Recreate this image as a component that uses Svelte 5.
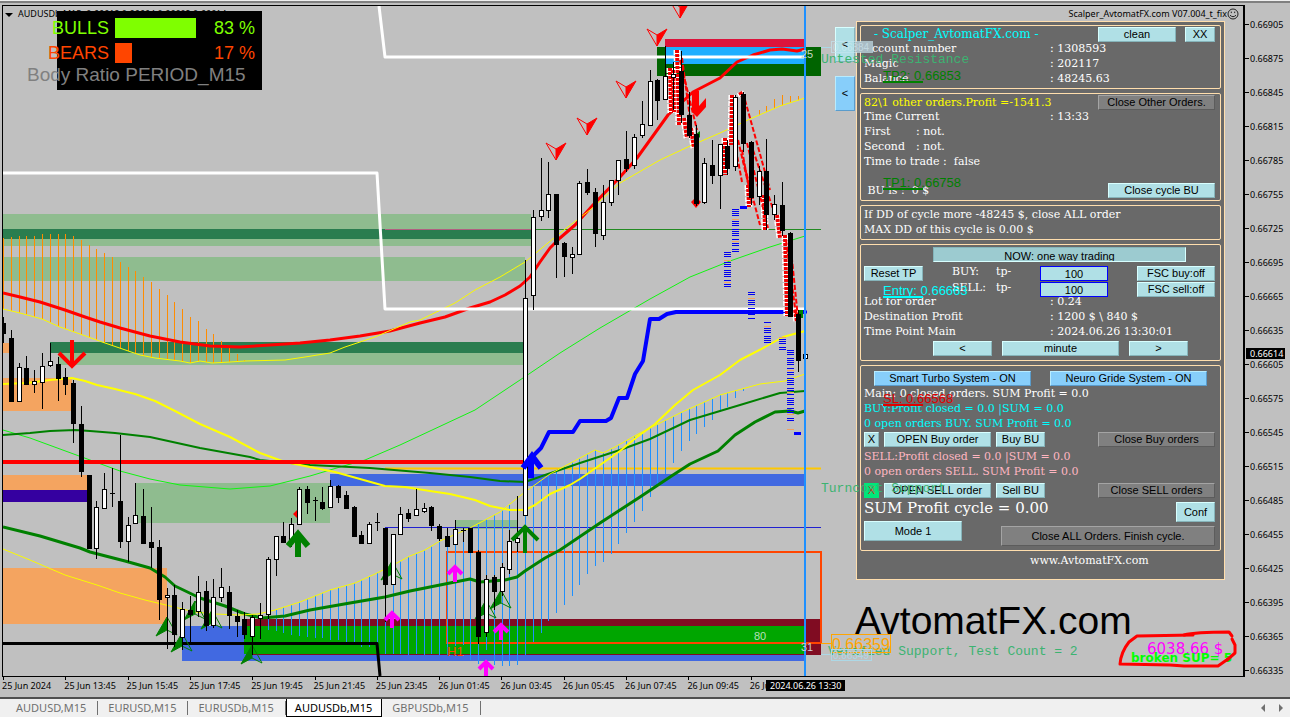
<script>
  const STEP = 7.79;
  const barX = (i) => Math.round(3 + STEP * i);

  // high, body top, body bottom, low, rising
  const candles = [
    [317, 323, 333, 343, 0], [330, 338, 401, 402, 0], [363, 367, 401, 401, 1], [356, 368, 384, 385, 0],
    [370, 381, 384, 393, 1], [353, 366, 382, 409, 1], [343, 361, 365, 367, 1], [357, 364, 378, 401, 0],
    [368, 377, 384, 395, 0], [380, 383, 423, 443, 0], [406, 424, 471, 477, 0], [475, 475, 548, 548, 0],
    [501, 507, 548, 559, 1], [473, 489, 508, 508, 1], [468, 493, 494, 507, 0], [435, 501, 541, 548, 0],
    [517, 525, 541, 562, 1], [483, 515, 523, 523, 1], [489, 516, 543, 543, 0], [507, 542, 547, 568, 0],
    [540, 547, 599, 620, 0], [588, 595, 597, 649, 1], [585, 595, 634, 647, 0], [602, 609, 637, 650, 1],
    [596, 610, 614, 645, 0], [576, 592, 611, 617, 1], [581, 591, 625, 631, 0], [579, 597, 625, 628, 1],
    [568, 587, 597, 602, 1], [586, 592, 615, 629, 0], [610, 616, 621, 637, 0], [612, 619, 634, 639, 0],
    [615, 617, 636, 655, 1], [603, 615, 618, 639, 1], [557, 559, 614, 619, 1], [536, 536, 559, 576, 1],
    [522, 536, 542, 542, 0], [518, 524, 539, 547, 1], [487, 489, 524, 524, 1], [486, 489, 502, 514, 0],
    [497, 500, 501, 521, 0], [487, 502, 508, 510, 0], [480, 486, 507, 507, 1], [485, 486, 497, 503, 0],
    [491, 495, 508, 509, 0], [506, 507, 536, 537, 0], [531, 535, 543, 543, 0], [522, 524, 543, 543, 1],
    [513, 522, 523, 531, 0], [528, 528, 584, 622, 0], [534, 534, 584, 584, 1], [507, 514, 534, 534, 1],
    [509, 513, 518, 522, 0], [489, 509, 515, 516, 1], [503, 508, 511, 513, 1], [506, 507, 525, 531, 0],
    [524, 526, 538, 541, 0], [528, 536, 546, 546, 0], [520, 529, 544, 544, 1], [528, 530, 531, 542, 0],
    [528, 528, 552, 552, 0], [550, 552, 636, 644, 0], [575, 579, 632, 637, 1], [575, 577, 591, 610, 0],
    [563, 567, 591, 596, 1], [530, 541, 569, 574, 1], [496, 538, 542, 552, 1], [260, 298, 515, 515, 1],
    [210, 217, 295, 310, 1], [158, 210, 216, 221, 1], [162, 194, 210, 218, 1], [194, 194, 244, 278, 0],
    [242, 243, 256, 277, 0], [247, 254, 257, 274, 1], [181, 183, 254, 254, 1], [169, 182, 192, 195, 0],
    [188, 192, 233, 247, 0], [185, 202, 235, 240, 1], [180, 180, 202, 206, 1], [160, 160, 180, 195, 1],
    [131, 159, 168, 172, 0], [134, 137, 165, 169, 1], [101, 124, 135, 138, 1], [70, 81, 125, 126, 1],
    [79, 80, 100, 120, 0], [46, 76, 99, 99, 1], [62, 74, 77, 110, 1], [51, 71, 114, 123, 0],
    [92, 115, 135, 138, 0], [125, 134, 203, 206, 0], [158, 163, 202, 204, 1], [140, 165, 175, 184, 0],
    [144, 144, 175, 209, 1], [140, 146, 168, 175, 0], [95, 97, 166, 171, 1], [92, 94, 143, 152, 0],
    [141, 142, 197, 205, 0], [166, 171, 196, 205, 1], [139, 171, 214, 230, 0], [195, 204, 214, 220, 1],
    [182, 205, 230, 236, 0], [232, 233, 316, 316, 0], [310, 314, 360, 372, 0], [354, 354, 358, 360, 1],
  ];

  const upperBand = [
    [3, 309], [20, 313], [42, 319], [60, 327], [80, 334], [105, 343], [140, 355], [155, 358], [180, 361],
    [190, 363], [200, 361], [212, 363], [230, 362], [245, 361], [285, 360], [305, 357], [330, 353],
    [345, 347], [375, 337], [410, 322], [420, 320], [455, 303], [475, 290], [500, 277], [525, 262],
    [560, 233], [590, 210], [620, 183], [660, 160], [690, 146], [720, 133], [750, 119], [780, 106], [805, 98],
  ];
  const lowerBand = [
    [3, 549], [30, 560], [65, 575], [97, 585], [120, 593], [145, 600], [170, 606], [195, 612], [215, 614],
    [240, 615], [258, 614], [275, 610], [300, 602], [330, 590], [355, 583], [375, 574], [395, 564],
    [410, 556], [425, 550], [440, 541], [470, 528], [500, 512], [525, 492], [550, 474], [565, 466],
    [580, 458], [595, 450], [603, 453], [615, 447], [640, 433], [680, 413], [720, 395], [760, 384],
    [785, 381], [805, 374],
  ];

  const at = (line, x) => {
    const k = Math.max(1, line.findIndex((p) => p[0] >= x));
    const [x0, y0] = line[k - 1];
    const [x1, y1] = line[k];
    return y0 + ((y1 - y0) * (x - x0)) / (x1 - x0);
  };

  const orangeTops = [
    238, 237, 236, 236, 236, 234, 234, 234, 234, 236, 240, 245, 249, 253, 257, 262, 267, 271, 277, 282,
    289, 295, 302, 309, 317, 321, 329, 334, 341, 347, 354, 360,
  ];
  const orangeRight = [[97, 110], [98, 106], [99, 99], [100, 95], [101, 96], [102, 96]];
  const orangeBars = [...orangeTops.map((y, i) => [i, y]), ...orangeRight].map(([i, y]) => ({
    x: barX(i),
    y1: y,
    y2: at(upperBand, barX(i)),
  }));

  // lower ends of the blue histogram, first one belongs to bar 33
  const blueEnds = [
    628, 630, 631, 633, 635, 636, 637, 638, 638, 640, 640, 642, 645, 647, 647, 650, 654, 654, 654, 655,
    654, 655, 654, 655, 655, 646, 645, 660, 664, 650, 665, 666, 666, 665, 655, 642, 633, 621, 613, 605,
    596, 585, 574, 566, 562, 554, 544, 533, 522, 511, 497, 487, 474, 463, 451, 441, 434, 427, 420, 412,
    407, 398, 391,
  ];
  const blueBars = blueEnds.map((y, k) => ({ x: barX(33 + k), y1: at(lowerBand, barX(33 + k)), y2: y }));

  const redMa =
    "3,293 20,297 40,302 65,310 85,317 100,322 120,328 150,336 180,342 210,346 240,347 270,345 300,343 330,340 360,336 390,331 420,323 445,317 470,308 490,302 505,295 520,286 530,277 540,262 550,248 560,238 575,225 593,205 620,177 637,158 650,140 668,115 693,92 720,78 737,62 753,55 770,50 782,49 797,51 805,49";
  const midYellow =
    "3,384 27,383 50,380 72,378 85,381 97,385 115,389 135,394 155,401 175,411 200,424 230,437 260,453 285,462 310,467 335,472 360,479 385,486 405,487 430,491 450,494 475,500 490,506 510,510 525,510 535,505 550,494 570,485 580,479 600,465 620,451 637,437 655,424 675,405 693,390 720,375 740,360 765,347 783,337 805,331";
  const greenThick =
    "3,527 40,536 80,548 90,552 125,561 150,568 165,577 175,586 200,598 225,606 245,614 262,618 285,616 310,610 350,603 385,597 410,591 430,587 450,583 470,579 480,582 505,580 517,577 525,571 545,558 560,550 600,523 640,497 670,477 690,464 718,451 735,435 755,422 775,412 790,411 798,413 805,411";
  const greenThin =
    "3,435 30,433 50,431 75,430 90,431 115,433 150,437 200,448 250,457 260,460 310,465 370,468 430,473 470,477 500,481 525,482 545,475 580,463 620,450 650,439 690,420 740,405 780,393 805,391";
  const limeLine =
    "3,430 30,438 60,449 90,460 120,471 150,479 180,485 230,489 270,486 310,476 340,467 365,460 400,445 430,431 475,410 520,380 560,353 600,328 650,299 690,277 730,261 770,247 805,236";
  const blueStep =
    "527,462 537,452 541,448 549,432 573,432 580,421 606,421 611,418 619,398 627,398 635,374 643,361 650,319 659,319 667,314 676,312 805,312";

  const zones = [
    [3, 214, 528, 32, "#8fbc8f"], [3, 229, 528, 10, "#2a7d4f"], [3, 257, 522, 24, "#8fbc8f"],
    [50, 342, 473, 11, "#2a7d4f"], [58, 353, 465, 12, "#8fbc8f"], [136, 483, 194, 40, "#8fbc8f"],
    [455, 520, 62, 9, "#8fbc8f"], [3, 343, 8, 10, "#f4a460"], [3, 378, 69, 33, "#f4a460"],
    [3, 475, 85, 15, "#f4a460"], [3, 490, 85, 12, "#3500a0"], [3, 568, 164, 56, "#f4a460"],
    [330, 474, 475, 12, "#4169e1"], [182, 626, 623, 35, "#4169e1"], [247, 619, 574, 36, "#800c22"],
    [244, 626, 561, 28, "#00a600"], [657, 47, 164, 29, "#006400"], [665, 39, 140, 8, "#dc143c"],
    [665, 47, 140, 17, "#1eaeff"],
  ];

  const halfDown = [[556, 151], [587, 126], [626, 89], [657, 37], [680, 9]];
  const halfUp = [[167, 627], [182, 643], [195, 611], [212, 620], [252, 655], [392, 571], [486, 610], [501, 600]];
  const magentaUp = [[455, 573], [392, 619], [501, 631], [486, 668]];

  // bar centre, first row, last row
  const stacks = [
    [735, 209, 251], [727, 252, 289], [751, 292, 319], [767, 322, 345], [782, 337, 349], [790, 350, 420], [790, 429, 430],
  ];
  const ticks = stacks.flatMap(([x, from, to], s) => {
    const rows = [];
    for (let y = from, n = s; y <= to; y += n % 4 === 3 ? 4 : 2, n++) {
      rows.push({ x: x - 3, y, color: n % 9 === 4 || to - from < 3 ? "#f4a060" : "#0000f0" });
    }
    return rows;
  });

  const trades = [
    "670,68 671,113", "677,50 679,125", "673,70 674,112", "684,118 687,138", "691,128 694,148", "725,138 725,175",
    "732,95 731,145", "740,92 742,96", "748,185 749,207", "764,195 765,230", "777,215 780,238",
    "785,235 787,316", "795,310 797,322",
  ];
  const tradeLinks = [
    "680,60 697,130", "682,58 690,118", "745,100 770,190", "736,150 742,182", "738,140 749,187", "742,150 752,205",
    "743,160 760,225", "747,143 768,228", "753,150 775,215", "786,240 796,315", "791,250 798,318",
  ];

  const prices = Array.from({ length: 20 }, (_, i) => (0.66905 - i * 0.0003).toFixed(5));
  const times = [
    "25 Jun 2024", "25 Jun 13:45", "25 Jun 15:45", "25 Jun 17:45", "25 Jun 19:45", "25 Jun 21:45", "25 Jun 23:45",
    "26 Jun 01:45", "26 Jun 03:45", "26 Jun 05:45", "26 Jun 07:45", "26 Jun 09:45", "26 Jun 11:45",
  ];
  const tabs = ["AUDUSD,M15", "EURUSD,M15", "EURUSDb,M15", "AUDUSDb,M15", "GBPUSDb,M15"];
  let active = $state("AUDUSDb,M15");

  const levels = [
    ["TP2: 0.66853", 80, "#008000"], ["TP1: 0.66758", 187, "#008000"],
    ["Entry: 0.66663", 295, "#00ffff"], ["SL: 0.66568", 403, "#e00000"],
  ];

  let buyTp = $state("100");
  let sellTp = $state("100");
  const str = (line) => line.map((p) => p.join(",")).join(" ");
</script>

<div class="terminal">
  <div class="toolbar-edge"></div>

  <main class="window">
    <section class="plot" aria-label="AUDUSDb M15 chart">
      <header class="chart-head">
        <span><i class="caret"></i>AUDUSDb,M15: 0.66618 0.66664 0.66602 0.66614</span>
        <span class="expert">
          Scalper_AvtomatFX.com V07.004_t_fix
          <svg width="12" height="12" viewBox="0 0 12 12" fill="none" stroke="#222">
            <circle cx="6" cy="6" r="5" />
            <path d="M3 7.2Q6 10.2 9 7.2M4.3 3.6v1.5M7.7 3.6v1.5" />
          </svg>
        </span>
      </header>

      <svg class="layer" width="1241" height="670" viewBox="3 6 1241 670">
        {#each zones as [x, y, w, h, fill]}
          <rect {x} {y} width={w} height={h} {fill} />
        {/each}
        <path d="M385 229.5H531" stroke="#b06080" />
        <path d="M531 229.5H821" stroke="#228b22" />
        <path d="M385 468.5H821" stroke="#ffc800" stroke-width="2" />
        <path d="M385 527.5H821" stroke="#2020d0" />
        <rect x="447" y="552" width="374" height="91" fill="none" stroke="#ff4500" stroke-width="2" />

        <g stroke="#ff8c00">
          {#each orangeBars as b}
            <line x1={b.x + 0.5} x2={b.x + 0.5} y1={b.y1} y2={b.y2} />
          {/each}
        </g>
        <g stroke="#1e90ff">
          {#each blueBars as b}
            <line x1={b.x + 0.5} x2={b.x + 0.5} y1={b.y1} y2={b.y2} />
          {/each}
        </g>

        <g fill="none" stroke-linejoin="round">
          <polyline points={limeLine} stroke="#11f511" />
          <polyline points={greenThin} stroke="#008000" stroke-width="2" />
          <polyline points={greenThick} stroke="#008000" stroke-width="3" />
          <polyline points={midYellow} stroke="#ffff00" stroke-width="2" />
          <polyline points={redMa} stroke="#ff0000" stroke-width="3" />
          <polyline points={str(upperBand)} stroke="#fafa00" />
          <polyline points={str(lowerBand)} stroke="#fafa00" />
          <path d="M3 462H523" stroke="#ff0000" stroke-width="4" />
          <path d="M379 6L385 57H805M3 173H377L385 309H805" stroke="#fff" stroke-width="3" />
          <polyline points={blueStep} stroke="#0000ff" stroke-width="4" />
          <path d="M3 643.5H377L380 676" stroke="#000" stroke-width="3" />
        </g>

        {#each halfUp as [x, y]}
          <g transform="translate({x} {y})" stroke="#008000">
            <path d="M0 -10L-11 9L0 3Z" fill="#008000" />
            <path d="M0 -10L10 8L0 3" fill="none" />
          </g>
        {/each}
        {#each halfDown as [x, y]}
          <g transform="translate({x} {y})" stroke="#ff0000">
            <path d="M0 9L10 -8L0 -2Z" fill="#ff0000" />
            <path d="M0 9L-10 -8L0 -2" fill="none" />
          </g>
        {/each}

        <path d="M692 112V91H699V106L706 98V107L697 117Z" fill="#ff0000" />
        <g fill="none">
          {#each trades as points}
            <polyline {points} stroke="#fff" stroke-width="7" stroke-dasharray="5 1" />
          {/each}
          {#each tradeLinks as points}
            <polyline {points} stroke="#ff0000" stroke-width="2" stroke-dasharray="5 2" />
          {/each}
          {#each trades as points}
            <polyline {points} stroke="#f00000" stroke-width="4" stroke-dasharray="3 1" />
          {/each}
        </g>
        <path d="M691 202L696 208L701 202L696 197Z M293 514L298 509L302 514L298 519Z" fill="#ff0000" />
        <path d="M696 134L700 131V138Z M781 218h4v9h-4Z M799 310h4v8h-4Z" fill="#008000" />

        {#each candles as [high, top, bottom, low, up], i}
          <line x1={barX(i) + 0.5} x2={barX(i) + 0.5} y1={high} y2={low} stroke="#000" />
          {#if bottom - top < 2}
            <rect x={barX(i) - 2} y={top} width="5" height="1" />
          {:else if up}
            <rect x={barX(i) - 1.5} y={top + 0.5} width="4" height={bottom - top} fill="#fff" stroke="#000" />
          {:else}
            <rect x={barX(i) - 2} y={top} width="5" height={bottom - top + 1} />
          {/if}
        {/each}

        <g fill="none" stroke-width="4">
          <path d="M72 340V364M59 353L72 366L85 353" stroke="#ff0000" />
          <path d="M525 553V529M512 540L525 527L538 540" stroke="#008000" />
          <path d="M531 478V456M523 468L532 456L541 468" stroke="#0000ff" stroke-width="6" />
          <path d="M298 557V536M288 546L298 534L308 546" stroke="#008000" stroke-width="6" />
          {#each magentaUp as [x, y]}
            <path transform="translate({x} {y})" d="M0 9V-5M-7 1L0 -6L7 1" stroke="#ff00ff" />
          {/each}
        </g>

        {#each ticks as t}
          <rect x={t.x} y={t.y} width="7" height="1" fill={t.color} />
        {/each}
        <path d="M740 207.5H747M794 433.5H801M803 312H807" stroke="#0000ff" stroke-width="3" />
        <path d="M805 6V676" stroke="#1e90ff" stroke-width="2" />

        <g class="sans" font-size="11">
          <text x="754" y="640" fill="#b8e0b8">80</text>
          <text x="801" y="651" fill="#c8c8d8">31</text>
          <text x="801" y="58" fill="#c8d8c8">25</text>
          <text x="447" y="656" font-size="13" fill="#ff4500">H1</text>
        </g>
      </svg>

      <div class="ratio">
        <span class="bulls">BULLS</span>
        <i class="bar bull-bar" style="width: 81px"></i>
        <span class="bulls">83 %</span>
        <span class="bears">BEARS</span>
        <i class="bar bear-bar" style="width: 17px"></i>
        <span class="bears">17 %</span>
        <span class="caption">Body Ratio PERIOD_M15</span>
      </div>

      <div class="dock">
        <div class="flips">
          <button class="flip">&lt;</button>
          <button class="flip sky">&lt;</button>
        </div>

        <div class="panel">
          <section class="box">
            <div class="line head">
              <h1>- Scalper_AvtomatFX.com -</h1>
              <button class="w78">clean</button>
              <button class="w30">XX</button>
            </div>
            <p><span>Account number</span>: 1308593</p>
            <p><span>Magic</span>: 202117</p>
            <p><span>Balance</span>: 48245.63</p>
          </section>

          <section class="box">
            <div class="line head">
              <strong>82\1 other orders.Profit =-1541.3</strong>
              <button class="w117 gray">Close Other Orders.</button>
            </div>
            <p><span>Time Current</span>: 13:33</p>
            <p><span class="short">First</span>: not.</p>
            <p><span class="short">Second</span>: not.</p>
            <p>Time to trade :&nbsp; false</p>
            <div class="line bu">
              <p>&nbsp;BU is :&nbsp; 0 $</p>
              <button class="w107">Close cycle BU</button>
            </div>
          </section>

          <section class="box">
            <p>If DD of cycle more -48245 $, close ALL order</p>
            <p>MAX DD of this cycle is 0.00 $</p>
          </section>

          <section class="box">
            <button class="mode-now">NOW: one way trading</button>
            <div class="tp">
              <button class="w59">Reset TP</button>
              <label for="buy-tp">BUY:</label><span>tp-</span>
              <input id="buy-tp" bind:value={buyTp} />
              <button class="w78">FSC buy:off</button>
              <i></i>
              <label for="sell-tp">SELL:</label><span>tp-</span>
              <input id="sell-tp" bind:value={sellTp} />
              <button class="w78">FSC sell:off</button>
            </div>
            <div class="after-tp">
              <p><span>Lot for order</span>: 0.24</p>
              <p><span>Destination Profit</span>: 1200 $ \ 840 $</p>
              <p><span>Time Point Main</span>: 2024.06.26 13:30:01</p>
            </div>
            <div class="line stepper">
              <button class="w59">&lt;</button>
              <button class="w117">minute</button>
              <button class="w59">&gt;</button>
            </div>
          </section>

          <section class="box">
            <div class="line systems">
              <button class="sky">Smart Turbo System - ON</button>
              <button class="sky">Neuro Gride System - ON</button>
            </div>
            <p>Main: 0 closed orders. SUM Profit = 0.0</p>
            <p class="cyan">BUY:Profit closed = 0.0 |SUM = 0.0</p>
            <p class="cyan">0 open orders BUY. SUM Profit = 0.0</p>
            <div class="line deal">
              <button class="w15">X</button>
              <button class="w107">OPEN Buy order</button>
              <button class="w49">Buy BU</button>
              <button class="w117 gray">Close Buy orders</button>
            </div>
            <p class="pink">SELL:Profit closed = 0.0 |SUM = 0.0</p>
            <p class="pink">0 open orders SELL. SUM Profit = 0.0</p>
            <div class="line deal sell">
              <button class="w15 on">X</button>
              <button class="w107">OPEN SELL order</button>
              <button class="w49">Sell BU</button>
              <button class="w117 gray">Close SELL orders</button>
            </div>
            <div class="finish">
              <div class="left">
                <p class="sum">SUM Profit cycle = 0.00</p>
                <button class="tall mode">Mode 1</button>
              </div>
              <div class="right">
                <button class="tall conf">Conf</button>
                <button class="tall gray all">Close ALL Orders. Finish cycle.</button>
              </div>
            </div>
          </section>

          <a href="#site">www.AvtomatFX.com</a>
        </div>
      </div>

      <svg class="layer marks" width="1241" height="670" viewBox="3 6 1241 670">
        <rect x="831.5" y="41.5" width="41" height="11" fill="none" stroke="#c4e4ee" stroke-opacity=".7" />
        <rect x="856" y="42" width="16" height="10" fill="#a9bcc4" />
        <text class="sans" x="833" y="51" font-size="10" fill="#d4ecf4" fill-opacity=".6">0.66884</text>
        <path d="M821 47.5H831M821 654.5H831" stroke="#add8e6" />
        <g class="mono" fill="#3cb371">
          <text x="821" y="63">Untested Resistance</text>
          <text x="821" y="492">Turncoat Support</text>
          <text x="828" y="655">Verified Support, Test Count = 2</text>
        </g>
        {#each levels as [label, y, color]}
          <g class="sans" font-size="13" fill={color}>
            <text x="883" {y}>{label}</text>
            <rect x="883" y={y + 1} width="40" height="2" />
          </g>
        {/each}
        <g class="sans">
          <text x="855" y="634" font-size="39">AvtomatFX.com</text>
          <rect x="831.5" y="634.5" width="59" height="18" fill="none" stroke="#ffa500" />
          <path d="M821 643.5H831" stroke="#ffa500" />
          <text x="832" y="650" font-size="16" fill="#ffa500">0.66359</text>
          <rect x="831.5" y="649.5" width="40" height="11" fill="none" stroke="#add8e6" />
          <text x="833" y="659" font-size="10" fill="#add8e6">0.66349</text>
        </g>
        <g class="verdana">
          <text x="1147" y="654" font-size="15" fill="#ff00ff">6038.66 $</text>
          <text x="1131" y="662" font-size="12" font-weight="700" fill="#00ff00">broken SUP= 5</text>
        </g>
        <g fill="none" stroke="#ff0000" stroke-width="3" stroke-linecap="round" stroke-linejoin="round">
          <path d="M1193 635L1137 636L1129 642Q1121 652 1120 664L1170 665L1184 666L1218 666L1228 659" />
          <path d="M1184 635Q1195 632 1229 632L1232 636M1232 639L1235 645L1235 653L1227 660" />
        </g>
      </svg>
    </section>

    <aside class="prices">
      {#each prices as price}
        <span>{price}</span>
      {/each}
      <b class="bid">0.66614</b>
    </aside>

    <footer class="times">
      <div class="dates">
        {#each times as time}
          <span>{time}</span>
        {/each}
      </div>
      <b class="cursor-time">2024.06.26 13:30</b>
    </footer>
  </main>

  <nav class="tabs">
    {#each tabs as tab}
      <button class:active={active === tab} onclick={() => (active = tab)}>{tab}</button>
    {/each}
    <div class="scroll">
      <svg width="24" height="8" viewBox="0 0 24 8" fill="#707070">
        <path d="M5 0V8L1 4ZM19 0V8L23 4Z" />
      </svg>
    </div>
  </nav>
</div>

<style>
  :global(body) {
    margin: 0;
    background: #c0c0c0;
  }

  .terminal {
    display: flex;
    flex-direction: column;
    height: 100vh;
    overflow: hidden;
    font-family: "Noto Sans", "Open Sans", sans-serif;
    font-size: 9px;
    color: #000;
  }

  .toolbar-edge {
    height: 1px;
    background: #f0f0f0;
    border-bottom: 2px solid #808080;
    margin-bottom: 2px;
  }

  .window {
    flex: 1;
    min-height: 0;
    display: grid;
    grid-template: minmax(0, 1fr) 20px / minmax(0, 1fr) 45px;
    padding-left: 2px;
    background: #c0c0c0;
  }

  .plot {
    position: relative;
    overflow: hidden;
    border: 1px solid #000;
    border-right-width: 2px;
  }

  .chart-head {
    display: flex;
    justify-content: space-between;
    padding: 0 4px 0 2px;
    line-height: 15px;
  }

  .caret {
    display: inline-block;
    margin-right: 5px;
    border: 4px solid transparent;
    border-top-color: #000;
    border-bottom: 0;
  }

  .expert {
    display: flex;
    align-items: center;
  }

  .layer {
    position: absolute;
    top: 0;
    left: 0;
  }

  .marks {
    pointer-events: none;
  }

  .sans {
    font-family: "Liberation Sans", Arial, sans-serif;
  }

  .mono {
    font: 13px "Liberation Mono", monospace;
  }

  .verdana {
    font-family: "DejaVu Sans", Verdana, sans-serif;
  }

  .ratio {
    position: absolute;
    top: 5px;
    left: 24px;
    width: 235px;
    height: 79px;
    box-sizing: border-box;
    padding: 4px 7px 0 0;
    display: grid;
    grid-template: 26px 24px 20px / 82px 82px 1fr;
    column-gap: 6px;
    justify-items: end;
    font: 18px/26px "Liberation Sans", Arial, sans-serif;
    background: linear-gradient(#000, #000) 30px 0 / 205px 79px no-repeat;
  }

  .ratio span,
  .ratio .bar {
    align-self: center;
  }

  .bulls {
    color: #7fff00;
  }

  .bears {
    color: #ff4500;
  }

  .bar {
    justify-self: start;
    height: 20px;
    background: #7fff00;
  }

  .bear-bar {
    background: #ff4500;
  }

  .ratio .caption {
    grid-column: 1 / -1;
    justify-self: start;
    font-size: 19px;
    color: #808080;
  }

  .dock {
    position: absolute;
    top: 15px;
    right: 18px;
    display: flex;
    font: 11px/15px "DejaVu Serif", "Bookman Old Style", serif;
    color: #fff;
  }

  .flips {
    display: flex;
    flex-direction: column;
    gap: 14px;
    padding-top: 6px;
  }

  .flips .flip {
    width: 20px;
    height: 35px;
  }

  .panel {
    box-sizing: border-box;
    width: 369px;
    height: 559px;
    padding: 3px;
    display: flex;
    flex-direction: column;
    background: #696969;
    border: 1px solid #ffdead;
    margin-left: 1px;
  }

  .box {
    border: 1px solid #ffdead;
    border-radius: 2px;
    padding: 1px 5px 2px 3px;
    margin-bottom: 4px;
  }

  p,
  h1 {
    margin: 0;
    font: inherit;
    white-space: nowrap;
  }

  h1 {
    padding-left: 10px;
    font-size: 12px;
    color: #00ffff;
  }

  strong {
    font-weight: 400;
    color: #ffff00;
    white-space: nowrap;
  }

  p span {
    display: inline-block;
    width: 186px;
  }

  p .short {
    width: 52px;
  }

  .line {
    display: flex;
  }

  .head {
    height: 14px;
    gap: 9px;
  }

  .head > :first-child {
    flex: 1;
  }

  .bu {
    justify-content: space-between;
    padding-top: 14px;
  }

  button,
  input {
    box-sizing: border-box;
    height: 15px;
    padding: 0;
    font: 11px/13px "Liberation Sans", Arial, sans-serif;
    text-align: center;
    white-space: nowrap;
    color: #000;
    background: #b0e0e6;
    border: 1px solid;
    border-color: #d8ffff #86b4ba #86b4ba #d8ffff;
    border-radius: 0;
  }

  input {
    width: 68px;
    border-color: #0000ff;
  }

  .sky {
    background: #87cefa;
    border-color: #b8ecff #5a9ccc #5a9ccc #b8ecff;
  }

  .gray {
    background: #808080;
    border-color: #a4a4a4 #5c5c5c #5c5c5c #a4a4a4;
  }

  .on {
    color: #d03020;
    background: #00e67a;
    border-color: #00e67a;
  }

  .w15 { width: 15px; }
  .w30 { width: 30px; }
  .w49 { width: 49px; }
  .w59 { width: 59px; }
  .w78 { width: 78px; }
  .w107 { width: 107px; }
  .w117 { width: 117px; }

  .mode-now {
    display: block;
    width: 253px;
    margin: 1px 0 4px 69px;
    line-height: 16px;
    overflow: hidden;
    background: #9ccbd0;
    border-color: #84b4ba #d8ffff #d8ffff #84b4ba;
  }

  .tp {
    display: grid;
    grid-template-columns: 88px 44px 44px 68px 1fr;
    row-gap: 1px;
    line-height: 12px;
  }

  .tp .w78 {
    justify-self: end;
  }

  .after-tp {
    margin-top: -3px;
  }

  .stepper {
    gap: 10px;
    padding: 2px 0 2px 69px;
  }

  .systems {
    gap: 19px;
    padding: 4px 0 0 10px;
  }

  .systems button {
    width: 157px;
  }

  .cyan {
    color: #00ffff;
  }

  .pink {
    color: #ffb6c1;
  }

  .deal {
    gap: 5px;
    padding: 1px 0 2px;
  }

  .sell {
    padding: 4px 0 0;
  }

  .deal .gray {
    margin-left: auto;
  }

  .finish {
    display: flex;
    justify-content: space-between;
    padding-bottom: 2px;
  }

  .left {
    width: 98px;
  }

  .sum {
    font-size: 15px;
    line-height: 20px;
    margin-bottom: 3px;
  }

  .right {
    display: flex;
    flex-direction: column;
    align-items: flex-end;
    gap: 4px;
    padding-top: 4px;
  }

  .tall {
    display: block;
    height: 20px;
  }

  .mode {
    width: 98px;
  }

  .conf {
    width: 39px;
  }

  .all {
    width: 214px;
  }

  .panel a {
    padding-left: 170px;
    line-height: 12px;
    color: #fff;
    text-decoration: none;
  }

  .prices {
    position: relative;
    min-height: 0;
    overflow: hidden;
    padding-top: 2px;
  }

  .prices span {
    display: flex;
    align-items: center;
    gap: 1px;
    height: 34px;
  }

  .prices span::before {
    content: "";
    width: 4px;
    height: 1px;
    background: #000;
  }

  .bid,
  .cursor-time {
    position: absolute;
    background: #000;
    color: #fff;
    font-weight: 400;
    line-height: 11px;
    white-space: nowrap;
  }

  .bid {
    top: 343px;
    left: 1px;
    padding: 0 2px 0 4px;
  }

  .times {
    position: relative;
    grid-column: 1 / -1;
  }

  .dates {
    display: grid;
    grid-template-columns: repeat(13, 1fr);
    width: 810px;
    line-height: 12px;
    white-space: nowrap;
  }

  .dates span::before {
    content: "";
    display: block;
    width: 1px;
    height: 3px;
    margin-left: 1px;
    background: #000;
  }

  .cursor-time {
    top: 3px;
    left: 764px;
    padding: 0 4px;
  }

  .tabs {
    display: flex;
    align-items: center;
    height: 18px;
    padding-left: 6px;
    background: #f0f0f0;
    border-top: 2px solid #505050;
    border-bottom: 3px solid #fff;
  }

  .tabs button {
    height: 14px;
    padding: 0 11px 0 10px;
    font: 11px/14px "Noto Sans", "Open Sans", sans-serif;
    color: #707070;
    background: none;
    border: 0;
    border-right: 1px solid #707070;
  }

  .tabs button.active {
    height: 18px;
    padding: 0 9px 0 8px;
    color: #000;
    background: #fff;
    border: 1px solid #000;
    border-top: 0;
  }

  .scroll {
    margin-left: auto;
    padding-right: 6px;
    line-height: 8px;
  }
</style>
